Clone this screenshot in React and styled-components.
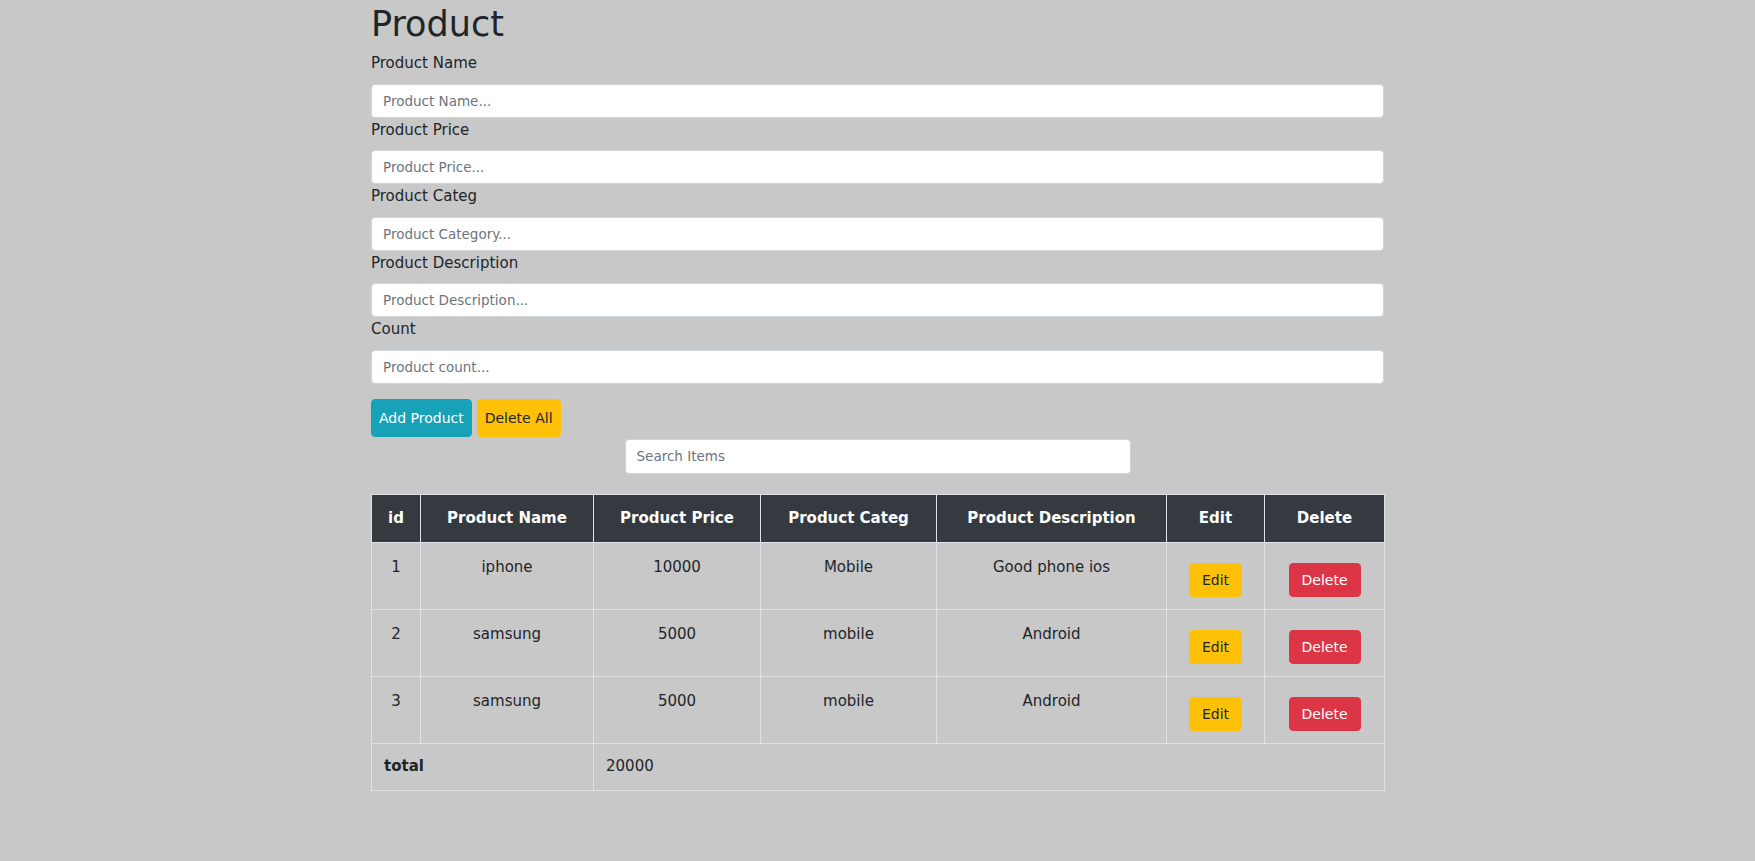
import styled, { createGlobalStyle } from 'styled-components';

const products = [
  { id: 1, name: 'iphone', price: 10000, category: 'Mobile', description: 'Good phone ios' },
  { id: 2, name: 'samsung', price: 5000, category: 'mobile', description: 'Android' },
  { id: 3, name: 'samsung', price: 5000, category: 'mobile', description: 'Android' },
];

const fields = [
  { label: 'Product Name', placeholder: 'Product Name...' },
  { label: 'Product Price', placeholder: 'Product Price...' },
  { label: 'Product Categ', placeholder: 'Product Category...' },
  { label: 'Product Description', placeholder: 'Product Description...' },
  { label: 'Count', placeholder: 'Product count...' },
];

const columns = [
  { title: 'id', width: 49 },
  { title: 'Product Name', width: 173 },
  { title: 'Product Price', width: 167 },
  { title: 'Product Categ', width: 176 },
  { title: 'Product Description', width: 230 },
  { title: 'Edit', width: 98 },
  { title: 'Delete', width: 120 },
];

const App = () => {
  const total = products.reduce((sum, p) => sum + p.price, 0);

  return (
    <>
      <GlobalStyle />
      <Container>
        <Title>Product</Title>
        {fields.map((f) => (
          <Field key={f.label}>
            <Label>{f.label}</Label>
            <Input placeholder={f.placeholder} />
          </Field>
        ))}
        <Actions>
          <Button $variant='info'>Add Product</Button>
          <Button $variant='warning'>Delete All</Button>
        </Actions>
        <Search placeholder='Search Items' />
        <Table>
          <colgroup>
            {columns.map((c) => (
              <col key={c.title} style={{ width: c.width }} />
            ))}
          </colgroup>
          <thead>
            <tr>
              {columns.map((c) => (
                <Th key={c.title}>{c.title}</Th>
              ))}
            </tr>
          </thead>
          <tbody>
            {products.map((p) => (
              <tr key={p.id}>
                <Td>{p.id}</Td>
                <Td>{p.name}</Td>
                <Td>{p.price}</Td>
                <Td>{p.category}</Td>
                <Td>{p.description}</Td>
                <Td>
                  <SmallButton $variant='warning'>Edit</SmallButton>
                </Td>
                <Td>
                  <SmallButton $variant='danger'>Delete</SmallButton>
                </Td>
              </tr>
            ))}
            <tr>
              <TotalCell colSpan={2}>
                <strong>total</strong>
              </TotalCell>
              <TotalCell colSpan={5}>{total}</TotalCell>
            </tr>
          </tbody>
        </Table>
      </Container>
    </>
  );
};

const GlobalStyle = createGlobalStyle`
  html, body {
    margin: 0;
    background: #c8c8c8;
  }
  body {
    font-family: "Comic Sans MS", "DejaVu Sans", sans-serif;
    font-size: 16px;
    line-height: 1.5;
    color: #212529;
  }
  * {
    box-sizing: border-box;
  }
`;

const variants = {
  info: { bg: '#17a2b8', color: '#fff' },
  warning: { bg: '#ffc107', color: '#212529' },
  danger: { bg: '#dc3545', color: '#fff' },
};

const Container = styled.div`
  width: 1013px;
  margin: 0 auto;
  padding-bottom: 60px;
`;

const Title = styled.h1`
  margin: 0 0 3px;
  font-size: 35px;
  font-weight: 400;
  line-height: 48px;
`;

const Field = styled.div`
  display: flex;
  flex-direction: column;
`;

const Label = styled.label`
  display: block;
  font-size: 15px;
  line-height: 24px;
  margin-bottom: 8.5px;
`;

const Input = styled.input`
  display: block;
  width: 100%;
  height: 34px;
  padding: 0 11px;
  font-family: inherit;
  font-size: 13.5px;
  color: #495057;
  background: #fff;
  border: 1px solid #ced4da;
  border-radius: 4px;
  outline: none;

  &::placeholder {
    color: #6c757d;
  }
`;

const Actions = styled.div`
  display: flex;
  gap: 5px;
  margin-top: 15px;
`;

const Button = styled.button`
  height: 38px;
  padding: 0 7px;
  font-family: inherit;
  font-size: 14px;
  font-weight: 500;
  border: 1px solid ${({ $variant }) => variants[$variant].bg};
  border-radius: 4px;
  background: ${({ $variant }) => variants[$variant].bg};
  color: ${({ $variant }) => variants[$variant].color};
  cursor: pointer;
`;

const Search = styled(Input)`
  width: 506px;
  height: 35px;
  margin: 2px auto 0;
`;

const Table = styled.table`
  width: 100%;
  margin-top: 20px;
  border-collapse: collapse;
  table-layout: fixed;
  border: 1px solid #dee2e6;
`;

const Th = styled.th`
  height: 48px;
  padding: 0 6px;
  background: #343a40;
  color: #fff;
  font-size: 15px;
  font-weight: 700;
  text-align: center;
  border: 1px solid #dee2e6;
  white-space: nowrap;
`;

const Td = styled.td`
  height: 66px;
  padding: 12px 6px;
  vertical-align: top;
  text-align: center;
  font-size: 15px;
  line-height: 24px;
  border: 1px solid #dee2e6;
`;

const TotalCell = styled.td`
  height: 47px;
  padding: 0 12px;
  font-size: 15px;
  text-align: left;
  vertical-align: middle;
  border: 1px solid #dee2e6;
`;

const SmallButton = styled(Button)`
  height: 34px;
  margin-top: 8px;
  padding: 0 12px;
`;

export default App;
